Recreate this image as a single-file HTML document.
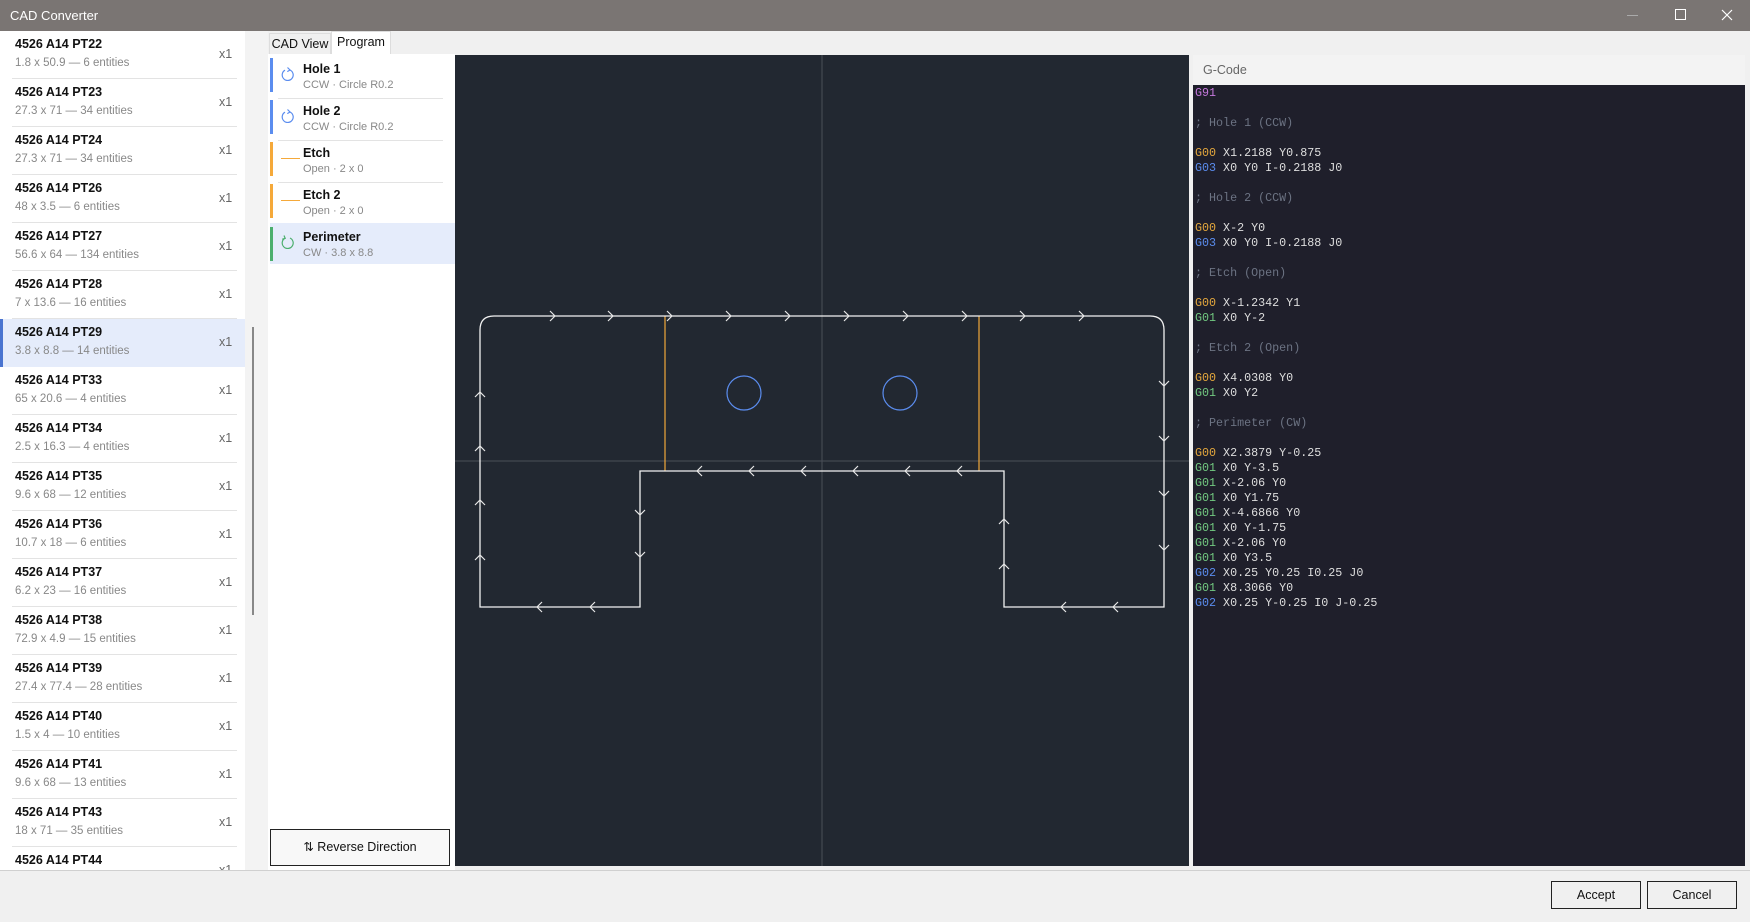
<!DOCTYPE html>
<html><head><meta charset="utf-8"><style>
*{box-sizing:border-box;margin:0;padding:0}
body{width:1750px;height:922px;overflow:hidden;background:#f0f0f0;font-family:"Liberation Sans",sans-serif;position:relative}
.abs{position:absolute}
#title{left:0;top:0;width:1750px;height:31px;background:#7a7573;color:#fff;font-size:13px;line-height:31px;padding-left:10px}
#left{left:0;top:31px;width:245px;height:839px;background:#fff;overflow:hidden}
.row{position:absolute;left:0;width:245px;height:48px}
.row .t{position:absolute;left:15px;top:6px;font-weight:bold;font-size:12.5px;color:#111}
.row .s{position:absolute;left:15px;top:26px;font-size:11.5px;color:#888}
.row .x{position:absolute;left:219px;top:16px;font-size:12.5px;color:#666}
.row .sep{position:absolute;left:12px;right:8px;bottom:0;height:1px;background:#e3e3e3}
.row.sel{background:#e5ecfb;border-left:3px solid #4a74d0}
.row.sel .t,.row.sel .s,.row.sel .x{margin-left:-3px}
#gutter{left:245px;top:31px;width:23px;height:839px;background:#f3f3f3}
#scroll{left:252px;top:327px;width:2px;height:288px;background:#888}
.tab{position:absolute;top:33px;height:21px;font-size:12.5px;line-height:20px;text-align:center;color:#111}
#prog{left:268px;top:54px;width:187px;height:816px;background:#fff}
.pi{position:absolute;left:2px;width:180px;height:42px}
.pi .bar{position:absolute;left:0;top:1px;width:3px;height:34px}
.pi .t{position:absolute;left:33px;top:5px;font-weight:bold;font-size:12.5px;color:#111}
.pi .s{position:absolute;left:33px;top:22px;font-size:11px;color:#888}
.pi .sep{position:absolute;left:8px;right:7px;bottom:0;height:1px;background:#e3e3e3}
.pi svg{position:absolute;left:11px;top:10px}
#rev{left:270px;top:829px;width:180px;height:37px;border:1.5px solid #222;background:#f8f8f8;font-size:12.5px;text-align:center;line-height:34px;color:#111}
#canvas{left:455px;top:55px;width:734px;height:811px;background:#222831}
#gh{left:1193px;top:55px;width:552px;height:30px;background:#f3f3f3;font-size:12.5px;color:#666;line-height:30px;padding-left:10px}
#gc{left:1193px;top:85px;width:552px;height:781px;background:#1f1f2b;font-family:"Liberation Mono",monospace;font-size:11.7px;line-height:15px;color:#dedede;padding:1px 0 0 2px;white-space:pre}
.p{color:#c678dd}.c{color:#6c7383}.o{color:#e5a83d}.b{color:#5b8def}.g{color:#72c981}
#bot{left:0;top:870px;width:1750px;height:52px;background:#f0f0f0;border-top:1px solid #d0d0d0}
.btn{position:absolute;top:881px;height:28px;border:1px solid #222;background:#f0f0f0;font-size:12.5px;text-align:center;line-height:26px;color:#111}
</style></head><body>
<div id="title" class="abs">CAD Converter</div>
<div class="abs" style="left:1627px;top:15px;width:11px;height:1px;background:#aaa"></div>
<div class="abs" style="left:1675px;top:9px;width:11px;height:11px;border:1px solid #fff"></div>
<svg class="abs" style="left:1721px;top:9px" width="12" height="12"><path d="M1 1L11 11M11 1L1 11" stroke="#fff" stroke-width="1.2"/></svg>

<div id="left" class="abs">
<div class="row" style="top:0"><div class="t">4526 A14 PT22</div><div class="s">1.8 x 50.9 — 6 entities</div><div class="x">x1</div><div class="sep"></div></div>
<div class="row" style="top:48px"><div class="t">4526 A14 PT23</div><div class="s">27.3 x 71 — 34 entities</div><div class="x">x1</div><div class="sep"></div></div>
<div class="row" style="top:96px"><div class="t">4526 A14 PT24</div><div class="s">27.3 x 71 — 34 entities</div><div class="x">x1</div><div class="sep"></div></div>
<div class="row" style="top:144px"><div class="t">4526 A14 PT26</div><div class="s">48 x 3.5 — 6 entities</div><div class="x">x1</div><div class="sep"></div></div>
<div class="row" style="top:192px"><div class="t">4526 A14 PT27</div><div class="s">56.6 x 64 — 134 entities</div><div class="x">x1</div><div class="sep"></div></div>
<div class="row" style="top:240px"><div class="t">4526 A14 PT28</div><div class="s">7 x 13.6 — 16 entities</div><div class="x">x1</div><div class="sep"></div></div>
<div class="row sel" style="top:288px"><div class="t">4526 A14 PT29</div><div class="s">3.8 x 8.8 — 14 entities</div><div class="x">x1</div></div>
<div class="row" style="top:336px"><div class="t">4526 A14 PT33</div><div class="s">65 x 20.6 — 4 entities</div><div class="x">x1</div><div class="sep"></div></div>
<div class="row" style="top:384px"><div class="t">4526 A14 PT34</div><div class="s">2.5 x 16.3 — 4 entities</div><div class="x">x1</div><div class="sep"></div></div>
<div class="row" style="top:432px"><div class="t">4526 A14 PT35</div><div class="s">9.6 x 68 — 12 entities</div><div class="x">x1</div><div class="sep"></div></div>
<div class="row" style="top:480px"><div class="t">4526 A14 PT36</div><div class="s">10.7 x 18 — 6 entities</div><div class="x">x1</div><div class="sep"></div></div>
<div class="row" style="top:528px"><div class="t">4526 A14 PT37</div><div class="s">6.2 x 23 — 16 entities</div><div class="x">x1</div><div class="sep"></div></div>
<div class="row" style="top:576px"><div class="t">4526 A14 PT38</div><div class="s">72.9 x 4.9 — 15 entities</div><div class="x">x1</div><div class="sep"></div></div>
<div class="row" style="top:624px"><div class="t">4526 A14 PT39</div><div class="s">27.4 x 77.4 — 28 entities</div><div class="x">x1</div><div class="sep"></div></div>
<div class="row" style="top:672px"><div class="t">4526 A14 PT40</div><div class="s">1.5 x 4 — 10 entities</div><div class="x">x1</div><div class="sep"></div></div>
<div class="row" style="top:720px"><div class="t">4526 A14 PT41</div><div class="s">9.6 x 68 — 13 entities</div><div class="x">x1</div><div class="sep"></div></div>
<div class="row" style="top:768px"><div class="t">4526 A14 PT43</div><div class="s">18 x 71 — 35 entities</div><div class="x">x1</div><div class="sep"></div></div>
<div class="row" style="top:816px"><div class="t">4526 A14 PT44</div><div class="x">x1</div></div>
</div>
<div id="gutter" class="abs"></div>
<div id="scroll" class="abs"></div>

<div class="tab" style="left:269px;width:62px;background:#f0f0f0;border:1px solid #ddd;border-bottom:none">CAD View</div>
<div class="tab" style="left:331px;top:31px;height:23px;width:60px;background:#fff;border:1px solid #ddd;border-bottom:none">Program</div>

<div id="prog" class="abs">
<div class="pi" style="top:3px"><div class="bar" style="background:#5b8def"></div><svg width="14" height="14"><path d="M4 3.2A5.5 5.5 0 1 0 9 3" fill="none" stroke="#5b8def" stroke-width="1.2"/><path d="M6.5 0.5L9 3L6.3 4.6" fill="none" stroke="#5b8def" stroke-width="1.2"/></svg><div class="t">Hole 1</div><div class="s">CCW · Circle R0.2</div><div class="sep"></div></div>
<div class="pi" style="top:45px"><div class="bar" style="background:#5b8def"></div><svg width="14" height="14"><path d="M4 3.2A5.5 5.5 0 1 0 9 3" fill="none" stroke="#5b8def" stroke-width="1.2"/><path d="M6.5 0.5L9 3L6.3 4.6" fill="none" stroke="#5b8def" stroke-width="1.2"/></svg><div class="t">Hole 2</div><div class="s">CCW · Circle R0.2</div><div class="sep"></div></div>
<div class="pi" style="top:87px"><div class="bar" style="background:#f5a93a"></div><div class="abs" style="left:11px;top:17px;width:19px;height:1px;background:#f5a93a"></div><div class="t">Etch</div><div class="s">Open · 2 x 0</div><div class="sep"></div></div>
<div class="pi" style="top:129px"><div class="bar" style="background:#f5a93a"></div><div class="abs" style="left:11px;top:17px;width:19px;height:1px;background:#f5a93a"></div><div class="t">Etch 2</div><div class="s">Open · 2 x 0</div></div>
<div class="pi" style="top:169px;height:41px;width:185px;background:#e5ecfb"><div class="bar" style="background:#4caf6e;top:4px"></div><svg width="14" height="14" style="top:12px"><path d="M4 3.2A5.5 5.5 0 1 0 9 3" fill="none" stroke="#4caf6e" stroke-width="1.2"/><path d="M3 0.5L4.2 3.4L1.2 4.2" fill="none" stroke="#4caf6e" stroke-width="1.2"/></svg><div class="t" style="top:7px">Perimeter</div><div class="s" style="top:24px">CW · 3.8 x 8.8</div></div>
</div>
<div id="rev" class="abs">⇅ Reverse Direction</div>

<svg id="canvas" class="abs" width="734" height="811" viewBox="455 55 734 811">
<line x1="822" y1="55" x2="822" y2="866" stroke="#4a4f57" stroke-width="1"/>
<line x1="455" y1="461" x2="1189" y2="461" stroke="#4a4f57" stroke-width="1"/>
<line x1="665" y1="316" x2="665" y2="471" stroke="#f0a83a" stroke-width="1.2"/>
<line x1="979" y1="316" x2="979" y2="471" stroke="#f0a83a" stroke-width="1.2"/>
<circle cx="744" cy="393" r="17" fill="none" stroke="#5b8def" stroke-width="1.2"/>
<circle cx="900" cy="393" r="17" fill="none" stroke="#5b8def" stroke-width="1.2"/>
<path d="M480 607V330Q480 316 494 316H1150Q1164 316 1164 330V607H1004V471H640V607Z" fill="none" stroke="#f2f2f2" stroke-width="1.3"/>
<g fill="none" stroke="#e8e8e8" stroke-width="1.2">
<path d="M550 311l5 5l-5 5M608 311l5 5l-5 5M667 311l5 5l-5 5M726 311l5 5l-5 5M785 311l5 5l-5 5M844 311l5 5l-5 5M903 311l5 5l-5 5M962 311l5 5l-5 5M1020 311l5 5l-5 5M1079 311l5 5l-5 5"/>
<path d="M702 466l-5 5l5 5M754 466l-5 5l5 5M806 466l-5 5l5 5M858 466l-5 5l5 5M910 466l-5 5l5 5M962 466l-5 5l5 5"/>
<path d="M542 602l-5 5l5 5M595 602l-5 5l5 5M1066 602l-5 5l5 5M1118 602l-5 5l5 5"/>
<path d="M475 397l5-5l5 5M475 451l5-5l5 5M475 505l5-5l5 5M475 560l5-5l5 5"/>
<path d="M1159 381l5 5l5-5M1159 436l5 5l5-5M1159 491l5 5l5-5M1159 545l5 5l5-5"/>
<path d="M635 510l5 5l5-5M635 552l5 5l5-5"/>
<path d="M999 524l5-5l5 5M999 569l5-5l5 5"/>
</g>
</svg>

<div id="gh" class="abs">G-Code</div>
<div id="gc" class="abs"><span class="p">G91</span>

<span class="c">; Hole 1 (CCW)</span>

<span class="o">G00</span> X1.2188 Y0.875
<span class="b">G03</span> X0 Y0 I-0.2188 J0

<span class="c">; Hole 2 (CCW)</span>

<span class="o">G00</span> X-2 Y0
<span class="b">G03</span> X0 Y0 I-0.2188 J0

<span class="c">; Etch (Open)</span>

<span class="o">G00</span> X-1.2342 Y1
<span class="g">G01</span> X0 Y-2

<span class="c">; Etch 2 (Open)</span>

<span class="o">G00</span> X4.0308 Y0
<span class="g">G01</span> X0 Y2

<span class="c">; Perimeter (CW)</span>

<span class="o">G00</span> X2.3879 Y-0.25
<span class="g">G01</span> X0 Y-3.5
<span class="g">G01</span> X-2.06 Y0
<span class="g">G01</span> X0 Y1.75
<span class="g">G01</span> X-4.6866 Y0
<span class="g">G01</span> X0 Y-1.75
<span class="g">G01</span> X-2.06 Y0
<span class="g">G01</span> X0 Y3.5
<span class="b">G02</span> X0.25 Y0.25 I0.25 J0
<span class="g">G01</span> X8.3066 Y0
<span class="b">G02</span> X0.25 Y-0.25 I0 J-0.25</div>

<div id="bot" class="abs"></div>
<div class="btn" style="left:1551px;width:90px">Accept</div>
<div class="btn" style="left:1647px;width:90px">Cancel</div>
</body></html>
